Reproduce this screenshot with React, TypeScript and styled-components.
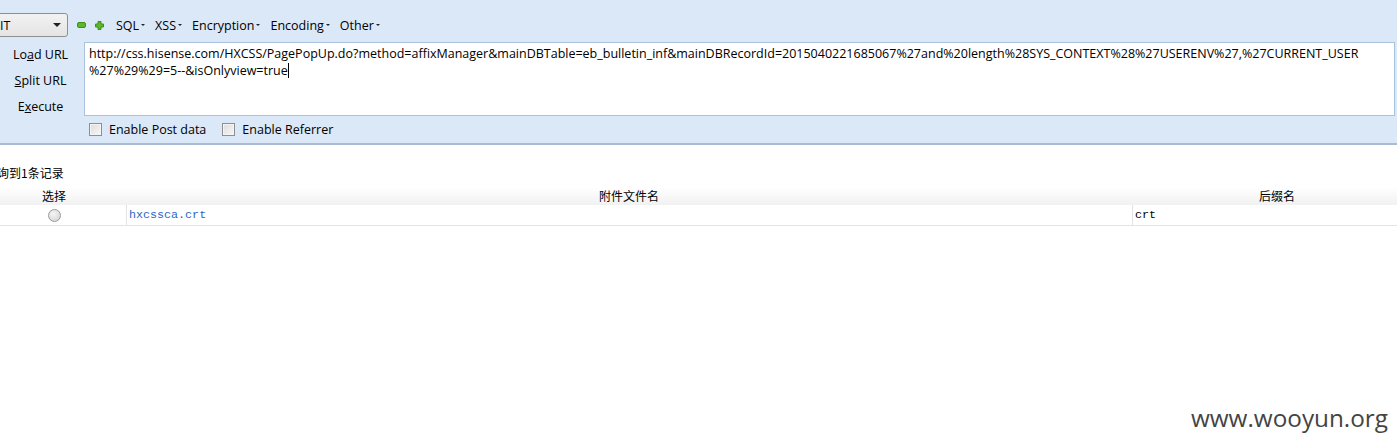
import styled, { createGlobalStyle } from "styled-components";

const GlobalStyle = createGlobalStyle`
  html, body {
    margin: 0;
    padding: 0;
    background: #ffffff;
    overflow: hidden;
  }
  body {
    font-family: "Open Sans", "Noto Sans", sans-serif;
    color: #000;
  }
`;

const Page = styled.div`
  position: relative;
  width: 1397px;
  height: 447px;
  overflow: hidden;
`;

const Panel = styled.div`
  background: #dbe8f7;
  border-bottom: 2px solid #a8bdd4;
  font-size: 12.5px;
`;

const Toolbar = styled.div`
  display: flex;
  align-items: center;
  height: 42px;
  padding-top: 8px;
  box-sizing: border-box;
`;

const Select = styled.div`
  display: flex;
  align-items: center;
  justify-content: space-between;
  box-sizing: border-box;
  width: 77px;
  height: 24px;
  margin-left: -9px;
  padding: 0 6px 0 8px;
  border: 1px solid #8e8f8f;
  border-radius: 3px;
  background: linear-gradient(#f2f2f2, #e4e4e4);
  font-size: 12.5px;
`;

const Arrow = styled.span<{ $size: number }>`
  width: 0;
  height: 0;
  border-left: ${(p) => p.$size}px solid transparent;
  border-right: ${(p) => p.$size}px solid transparent;
  border-top: ${(p) => p.$size}px solid #222;
`;

const IconButton = styled.span`
  display: inline-flex;
  margin-left: 9px;
`;

const MenuItem = styled.span<{ $first?: boolean }>`
  display: inline-flex;
  align-items: center;
  gap: 2px;
  margin-left: ${(p) => (p.$first ? 12 : 10)}px;
  font-size: 12.5px;
  color: #000;
`;

const Body = styled.div`
  display: flex;
  height: 74px;
`;

const Sidebar = styled.div`
  display: flex;
  flex-direction: column;
  width: 84px;
`;

const SideButton = styled.div`
  height: 26px;
  line-height: 26px;
  padding-right: 3px;
  text-align: center;
  font-size: 12.5px;
  u {
    text-decoration: underline;
    text-underline-offset: 1px;
  }
`;

const UrlBox = styled.div`
  flex: 1;
  margin-right: 2px;
  box-sizing: border-box;
  background: #fff;
  border: 1px solid #a9c3df;
  padding: 2px 4px;
  font-size: 12.5px;
  line-height: 17px;
  word-break: break-all;
`;

const Caret = styled.span`
  display: inline-block;
  width: 1px;
  height: 15px;
  background: #000;
  vertical-align: -3px;
`;

const Options = styled.div`
  display: flex;
  align-items: center;
  height: 27px;
  padding-left: 89px;
`;

const Check = styled.label`
  display: inline-flex;
  align-items: center;
  gap: 7px;
  margin-right: 16px;
  font-size: 12.5px;
`;

const Box = styled.span`
  width: 11px;
  height: 11px;
  border: 1px solid #8f8f8f;
  background: linear-gradient(135deg, #dcdcdc, #f8f8f8);
  box-shadow: inset 0 0 0 1px #f4f4f4;
`;

const Results = styled.div`
  margin-left: -18px;
  font-family: "Noto Sans CJK SC", "Liberation Sans", sans-serif;
  font-size: 12px;
`;

const Count = styled.div`
  height: 20px;
  line-height: 20px;
  margin-top: 18px;
  margin-left: 3px;
  margin-bottom: 4px;
`;

const Table = styled.div`
  display: grid;
  grid-template-columns: 144px 1006px 290px;
  width: 1440px;
`;

const HeadCell = styled.div`
  height: 18px;
  line-height: 18px;
  text-align: center;
  background: linear-gradient(#ffffff, #f1f1f1);
`;

const Cell = styled.div<{ $center?: boolean; $divider?: boolean }>`
  height: 20px;
  display: flex;
  align-items: center;
  justify-content: ${(p) => (p.$center ? "center" : "flex-start")};
  padding-left: ${(p) => (p.$center ? 0 : 2)}px;
  border-bottom: 1px solid #e3e3e3;
  border-left: ${(p) => (p.$divider ? "1px solid #e3e3e3" : "none")};
  font-family: "Liberation Mono", "Noto Sans CJK SC", monospace;
  font-size: 11.7px;
`;

const Link = styled.span`
  color: #2b64c8;
`;

const Radio = styled.span`
  width: 11px;
  height: 11px;
  border-radius: 50%;
  border: 1px solid #9a9a9a;
  background: radial-gradient(circle at 40% 35%, #f6f6f6, #cfcfcf);
`;

const Watermark = styled.div`
  position: absolute;
  right: 9px;
  bottom: 13px;
  font-family: "Open Sans", "Noto Sans", sans-serif;
  font-size: 24.3px;
  color: #444;
`;

function MinusIcon() {
  return (
    <svg width="9" height="6" viewBox="0 0 9 6">
      <rect x="0.5" y="0.5" width="8" height="5" rx="1.5" fill="#5cb82a" stroke="#3f8f18" />
    </svg>
  );
}

function PlusIcon() {
  return (
    <svg width="9" height="9" viewBox="0 0 9 9">
      <path
        d="M3 0.5h3v2.5h2.5v3H6v2.5H3V6H0.5V3H3z"
        fill="#5cb82a"
        stroke="#3f8f18"
        strokeLinejoin="round"
      />
    </svg>
  );
}

const menus = ["SQL", "XSS", "Encryption", "Encoding", "Other"];

export default function App() {
  return (
    <Page>
      <GlobalStyle />
      <Panel>
        <Toolbar>
          <Select>
            <span>IT</span>
            <Arrow $size={4} />
          </Select>
          <IconButton>
            <MinusIcon />
          </IconButton>
          <IconButton>
            <PlusIcon />
          </IconButton>
          {menus.map((m, i) => (
            <MenuItem key={m} $first={i === 0}>
              {m}
              <Arrow $size={2} />
            </MenuItem>
          ))}
        </Toolbar>
        <Body>
          <Sidebar>
            <SideButton>
              Lo<u>a</u>d URL
            </SideButton>
            <SideButton>
              <u>S</u>plit URL
            </SideButton>
            <SideButton>
              E<u>x</u>ecute
            </SideButton>
          </Sidebar>
          <UrlBox>
            http://css.hisense.com/HXCSS/PagePopUp.do?method=affixManager&amp;mainDBTable=eb_bulletin_inf&amp;mainDBRecordId=2015040221685067%27and%20length%28SYS_CONTEXT%28%27USERENV%27,%27CURRENT_USER
            <br />
            %27%29%29=5--&amp;isOnlyview=true
            <Caret />
          </UrlBox>
        </Body>
        <Options>
          <Check>
            <Box />
            Enable Post data
          </Check>
          <Check>
            <Box />
            Enable Referrer
          </Check>
        </Options>
      </Panel>
      <Results>
        <Count>查询到1条记录</Count>
        <Table>
          <HeadCell>选择</HeadCell>
          <HeadCell>附件文件名</HeadCell>
          <HeadCell>后缀名</HeadCell>
          <Cell $center>
            <Radio />
          </Cell>
          <Cell $divider>
            <Link>hxcssca.crt</Link>
          </Cell>
          <Cell $divider>crt</Cell>
        </Table>
      </Results>
      <Watermark>www.wooyun.org</Watermark>
    </Page>
  );
}
